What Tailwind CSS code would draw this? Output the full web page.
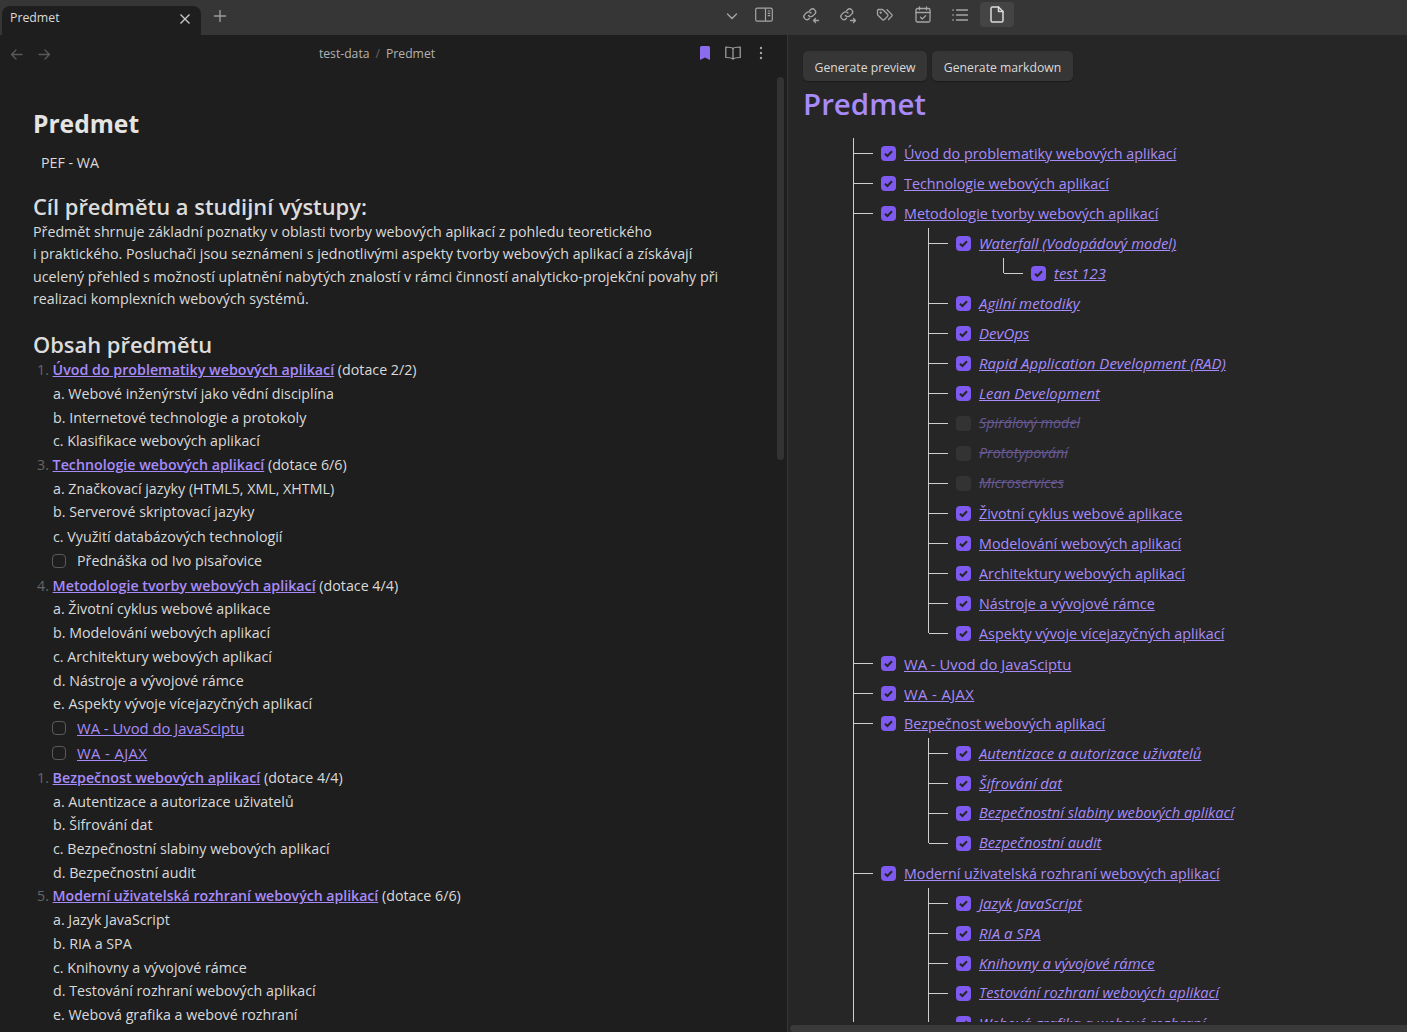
<!DOCTYPE html>
<html><head><meta charset="utf-8"><script src="https://cdn.jsdelivr.net/npm/@tailwindcss/browser@4"></script></head>
<body class="bg-[#1e1e1e] overflow-hidden">
<div class="w-[1407px] h-[1032px] flex flex-col overflow-hidden font-['Open_Sans','Noto_Sans',sans-serif] text-[14.25px] text-[#dadada]">
<!-- top bar -->
<header class="h-[35px] shrink-0 bg-[#363636] flex">
  <div class="w-[787px] flex items-end relative pl-[2px]">
    <div class="w-[199px] h-[29px] bg-[#1e1e1e] rounded-t-lg flex items-center justify-between pl-2 pr-[10px] text-[12.3px] text-[#dadada] pb-[4px]">
      <span>Predmet</span>
      <svg class="w-[12px] h-[12px]" viewBox="0 0 12 12" fill="none" stroke="#c8c8c8" stroke-width="1.4"><path d="M1.5 1.5l9 9M10.5 1.5l-9 9"/></svg>
    </div>
    <svg class="ml-[13px] mb-[13px] w-[12px] h-[12px]" viewBox="0 0 12 12" fill="none" stroke="#999" stroke-width="1.4"><path d="M6 0v12M0 6h12"/></svg>
    <svg class="absolute left-[726px] top-[10px] w-[12px] h-[12px]" viewBox="0 0 12 12" fill="none" stroke="#a5a5a5" stroke-width="1.4" stroke-linecap="round"><path d="M1.5 4l4.5 4.5L10.5 4"/></svg>
    <svg class="absolute left-[755px] top-[7px] w-[18px] h-[16px]" viewBox="0 0 18 16" fill="none" stroke="#a5a5a5" stroke-width="1.2"><rect x=".7" y="1.2" width="16.6" height="13" rx="1.5"/><path d="M10.5 1.2v13M12.7 4h2.6M12.7 6.3h2.6M12.7 8.6h2.6"/></svg>
  </div>
  <div class="flex-1 flex items-start pl-[7px] pt-[2px] gap-[3px]">
    <div class="w-[34px] h-[25px] flex items-center justify-center">
      <svg class="w-[18px] h-[18px]" viewBox="0 0 18 18" fill="none" stroke="#a5a5a5" stroke-width="1.3" stroke-linecap="round" stroke-linejoin="round"><path d="M6.500 9.500a3 3 0 0 0 4.500.3l1.700-1.700a3 3 0 0 0-4.200-4.300l-1 1"/><path d="M9 7a3 3 0 0 0-4.500-.3L2.800 8.400a3 3 0 0 0 4.200 4.300l.5-.5"/><path d="M16.500 14.500h-5M13.500 12.500l-2 2 2 2"/></svg>
    </div>
    <div class="w-[34px] h-[25px] flex items-center justify-center">
      <svg class="w-[18px] h-[18px]" viewBox="0 0 18 18" fill="none" stroke="#a5a5a5" stroke-width="1.3" stroke-linecap="round" stroke-linejoin="round"><path d="M6.500 9.500a3 3 0 0 0 4.500.3l1.700-1.700a3 3 0 0 0-4.200-4.300l-1 1"/><path d="M9 7a3 3 0 0 0-4.500-.3L2.800 8.400a3 3 0 0 0 4.200 4.300l.5-.5"/><path d="M11.500 14.500h5M14.500 12.500l2 2-2 2"/></svg>
    </div>
    <div class="w-[34px] h-[25px] flex items-center justify-center">
      <svg class="w-[18px] h-[18px]" viewBox="0 0 18 18" fill="none" stroke="#a5a5a5" stroke-width="1.3" stroke-linecap="round" stroke-linejoin="round"><path d="M1.500 4.500v3.700c0 .4.200.8.500 1l4.300 4.300a1.500 1.500 0 0 0 2.100 0l3.100-3.100a1.500 1.500 0 0 0 0-2.100L7.200 4a1.500 1.500 0 0 0-1-.5H2.500a1 1 0 0 0-1 1z"/><path d="M11 3.800l4.800 4.800a1 1 0 0 1 0 1.500L12.500 13.500"/><circle cx="4.700" cy="6.700" r=".5"/></svg>
    </div>
    <div class="w-[34px] h-[25px] flex items-center justify-center ml-[1px]">
      <svg class="w-[16px] h-[17px]" viewBox="0 0 16 17" fill="none" stroke="#a5a5a5" stroke-width="1.3" stroke-linecap="round" stroke-linejoin="round"><rect x="1" y="2.500" width="14" height="13.500" rx="1.500"/><path d="M1 6.500h14M4.500 .8v3M11.500 .8v3M5.500 11.200l1.800 1.800 3.400-3.400"/></svg>
    </div>
    <div class="w-[34px] h-[25px] flex items-center justify-center">
      <svg class="w-[16px] h-[14px]" viewBox="0 0 16 14" fill="none" stroke="#a5a5a5" stroke-width="1.300" stroke-linecap="round"><path d="M4.500 2h11M4.500 7h11M4.500 12h11M.8 2h.5M.8 7h.5M.8 12h.5"/></svg>
    </div>
    <div class="w-[34px] h-[25px] flex items-center justify-center bg-[#444444] rounded-[4px]">
      <svg class="w-[14px] h-[17px]" viewBox="0 0 14 17" fill="none" stroke="#dadada" stroke-width="1.500" stroke-linecap="round" stroke-linejoin="round"><path d="M8.500 1H2.500A1.500 1.500 0 0 0 1 2.500v12A1.500 1.500 0 0 0 2.500 16h9a1.500 1.500 0 0 0 1.500-1.500V5.500z"/><path d="M8.500 1v4.500H13"/></svg>
    </div>
  </div>
</header>
<div class="flex-1 flex min-h-0">
<!-- left pane -->
<main class="w-[787px] shrink-0 relative flex flex-col">
  <div class="h-[37px] shrink-0 relative flex items-center justify-center text-[12.2px] text-[#b3b3b3] pt-[2px]">
    <svg class="absolute left-[10px] top-[13px] w-[13px] h-[13px]" viewBox="0 0 13 13" fill="none" stroke="#5a5a5a" stroke-width="1.300" stroke-linecap="round" stroke-linejoin="round"><path d="M12 6.500H1.500M6 2L1.500 6.500 6 11"/></svg>
    <svg class="absolute left-[38px] top-[13px] w-[13px] h-[13px]" viewBox="0 0 13 13" fill="none" stroke="#5a5a5a" stroke-width="1.300" stroke-linecap="round" stroke-linejoin="round"><path d="M1 6.500h10.500M7 2l4.500 4.500L7 11"/></svg>
    <span class="-ml-[33px]">test-data<span class="text-[#666] mx-[6px]">/</span>Predmet</span>
    <svg class="absolute left-[699px] top-[11px] w-[12px] h-[15px]" viewBox="0 0 12 15" fill="#8b6cef"><path d="M1 1.500A1.500 1.500 0 0 1 2.500 0h7A1.500 1.500 0 0 1 11 1.500V14L6 11.500 1 14z"/></svg>
    <svg class="absolute left-[725px] top-[11px] w-[16px] h-[14px]" viewBox="0 0 16 14" fill="none" stroke="#a5a5a5" stroke-width="1.200" stroke-linejoin="round"><path d="M8 2.500C6.500 1 4 1 .8 1v10.500c3 0 5.500 0 7.200 1.500 1.700-1.500 4.200-1.500 7.200-1.500V1C12 1 9.500 1 8 2.500zM8 2.500V13"/></svg>
    <svg class="absolute left-[759px] top-[11px] w-[4px] h-[14px]" viewBox="0 0 4 14" fill="#a5a5a5"><circle cx="2" cy="2" r="1.200"/><circle cx="2" cy="7" r="1.200"/><circle cx="2" cy="12" r="1.200"/></svg>
  </div>
  <div class="absolute left-[777px] top-[42px] w-[7px] h-[383px] bg-[#333333] rounded-full"></div>
  <article class="flex-1 overflow-hidden pl-[33px] pr-[60px] pt-[33px]">
    <h1 class="text-[24.600px] leading-[36px] font-bold text-[#e4e4e4] pt-px">Predmet</h1>
    <p class="pl-[8px] leading-[24px] mt-[9px]">PEF - WA</p>
    <h2 class="text-[21.900px] leading-[32px] font-semibold text-[#dcdcdc] mt-[16px] w-max">Cíl předmětu a studijní výstupy:</h2>
    <p class="leading-[22.400px] mt-[-2px] w-[700px]">Předmět shrnuje základní poznatky v oblasti tvorby webových aplikací z pohledu teoretického<br>i praktického. Posluchači jsou seznámeni s jednotlivými aspekty tvorby webových aplikací a získávají<br>ucelený přehled s možností uplatnění nabytých znalostí v rámci činností analyticko-projekční povahy při<br>realizaci komplexních webových systémů.</p>
    <h2 class="text-[21.900px] leading-[32px] font-semibold text-[#dcdcdc] mt-[18px]">Obsah předmětu</h2>
    <ol class="-ml-[33px] mt-[-2.5px] leading-[23.700px]">
      <li class="pl-[37px]"><span class="text-[#666]">1.</span> <a class="font-semibold text-[#a88bfa] underline">Úvod do problematiky webových aplikací</a> (dotace 2/2)</li>
      <li class="pl-[53px]">a. Webové inženýrství jako vědní disciplína</li>
      <li class="pl-[53px]">b. Internetové technologie a protokoly</li>
      <li class="pl-[53px]">c. Klasifikace webových aplikací</li>
      <li class="pl-[37px]"><span class="text-[#666]">3.</span> <a class="font-semibold text-[#a88bfa] underline">Technologie webových aplikací</a> (dotace 6/6)</li>
      <li class="pl-[53px]">a. Značkovací jazyky (HTML5, XML, XHTML)</li>
      <li class="pl-[53px]">b. Serverové skriptovací jazyky</li>
      <li class="pl-[53px] mt-px">c. Využití databázových technologií</li>
      <li class="pl-[52px] flex items-center gap-[11px] h-[25px]"><span class="w-[14px] h-[14px] rounded-[4px] border border-[#5a5a5a]"></span>Přednáška od Ivo pisařovice</li>
      <li class="pl-[37px]"><span class="text-[#666]">4.</span> <a class="font-semibold text-[#a88bfa] underline">Metodologie tvorby webových aplikací</a> (dotace 4/4)</li>
      <li class="pl-[53px]">a. Životní cyklus webové aplikace</li>
      <li class="pl-[53px]">b. Modelování webových aplikací</li>
      <li class="pl-[53px]">c. Architektury webových aplikací</li>
      <li class="pl-[53px]">d. Nástroje a vývojové rámce</li>
      <li class="pl-[53px]">e. Aspekty vývoje vícejazyčných aplikací</li>
      <li class="pl-[52px] flex items-center gap-[11px] h-[25px]"><span class="w-[14px] h-[14px] rounded-[4px] border border-[#5a5a5a]"></span><a class="text-[#a88bfa] underline text-[14.800px]">WA - Uvod do JavaSciptu</a></li>
      <li class="pl-[52px] flex items-center gap-[11px] h-[25px]"><span class="w-[14px] h-[14px] rounded-[4px] border border-[#5a5a5a]"></span><a class="text-[#a88bfa] underline text-[14.800px] tracking-[0.4px]">WA - AJAX</a></li>
      <li class="pl-[37px]"><span class="text-[#666]">1.</span> <a class="font-semibold text-[#a88bfa] underline">Bezpečnost webových aplikací</a> (dotace 4/4)</li>
      <li class="pl-[53px]">a. Autentizace a autorizace uživatelů</li>
      <li class="pl-[53px]">b. Šifrování dat</li>
      <li class="pl-[53px]">c. Bezpečnostní slabiny webových aplikací</li>
      <li class="pl-[53px]">d. Bezpečnostní audit</li>
      <li class="pl-[37px]"><span class="text-[#666]">5.</span> <a class="font-semibold text-[14.100px] text-[#a88bfa] underline">Moderní uživatelská rozhraní webových aplikací</a> (dotace 6/6)</li>
      <li class="pl-[53px]">a. Jazyk JavaScript</li>
      <li class="pl-[53px]">b. RIA a SPA</li>
      <li class="pl-[53px]">c. Knihovny a vývojové rámce</li>
      <li class="pl-[53px]">d. Testování rozhraní webových aplikací</li>
      <li class="pl-[53px]">e. Webová grafika a webové rozhraní</li>
    </ol>
  </article>
</main>
<!-- right pane -->
<aside class="flex-1 min-w-0 bg-[#262626] border-l border-[#363636] relative flex flex-col">
  <div class="h-[987px] overflow-hidden pl-[15px] pt-[16px]">
    <div class="flex gap-[5px]">
      <button class="h-[30px] w-[124px] pt-[4px] rounded-[5px] bg-[#363636] text-[12.200px] text-[#dadada] shadow-[0_1px_1px_rgba(0,0,0,0.3)]">Generate preview</button>
      <button class="h-[30px] w-[141px] pt-[4px] rounded-[5px] bg-[#363636] text-[12.200px] text-[#dadada] shadow-[0_1px_1px_rgba(0,0,0,0.3)]">Generate markdown</button>
    </div>
    <h1 class="text-[29.500px] leading-[46px] font-semibold text-[#a88bfa]">Predmet</h1>
    <ul class="ml-[50px] mt-[11px] text-[14.350px] [&_li]:relative [&_li]:border-l [&_li]:border-[#cfcfcf] [&_li:last-child]:border-l-transparent [&_ul]:ml-[74px] [&_a]:text-[#a88bfa] [&_a]:underline [&_a]:pt-[2px] [&_a.italic]:pt-0 [&_.r]:flex [&_.r]:items-center [&_.r]:h-[30px] [&_.c]:w-[19px] [&_.c]:h-px [&_.c]:bg-[#cfcfcf] [&_.c]:mr-[8px] [&_svg]:w-[15px] [&_svg]:h-[15px] [&_svg]:mr-[8px] [&_svg]:shrink-0">
      <li><div class="r"><i class="c"></i><svg viewBox="0 0 15 15"><rect width="15" height="15" rx="4" fill="#7f5af0"/><path d="M4 7.800l2.400 2.200L11 5.200" fill="none" stroke="#262626" stroke-width="2"/></svg><a>Úvod do problematiky webových aplikací</a></div></li>
      <li><div class="r"><i class="c"></i><svg viewBox="0 0 15 15"><rect width="15" height="15" rx="4" fill="#7f5af0"/><path d="M4 7.800l2.400 2.200L11 5.200" fill="none" stroke="#262626" stroke-width="2"/></svg><a>Technologie webových aplikací</a></div></li>
      <li><div class="r"><i class="c"></i><svg viewBox="0 0 15 15"><rect width="15" height="15" rx="4" fill="#7f5af0"/><path d="M4 7.800l2.400 2.200L11 5.200" fill="none" stroke="#262626" stroke-width="2"/></svg><a>Metodologie tvorby webových aplikací</a></div>
        <ul>
          <li><div class="r"><i class="c"></i><svg viewBox="0 0 15 15"><rect width="15" height="15" rx="4" fill="#7f5af0"/><path d="M4 7.800l2.400 2.200L11 5.200" fill="none" stroke="#262626" stroke-width="2"/></svg><a class="italic text-[14.800px]">Waterfall (Vodopádový model)</a></div>
            <ul>
              <li><b class="absolute -left-px top-0 w-px h-[15px] bg-[#cfcfcf]"></b><div class="r"><i class="c"></i><svg viewBox="0 0 15 15"><rect width="15" height="15" rx="4" fill="#7f5af0"/><path d="M4 7.800l2.400 2.200L11 5.200" fill="none" stroke="#262626" stroke-width="2"/></svg><a class="italic text-[14.800px]">test 123</a></div></li>
            </ul>
          </li>
          <li><div class="r"><i class="c"></i><svg viewBox="0 0 15 15"><rect width="15" height="15" rx="4" fill="#7f5af0"/><path d="M4 7.800l2.400 2.200L11 5.200" fill="none" stroke="#262626" stroke-width="2"/></svg><a class="italic text-[15px]">Agilní metodiky</a></div></li>
          <li><div class="r"><i class="c"></i><svg viewBox="0 0 15 15"><rect width="15" height="15" rx="4" fill="#7f5af0"/><path d="M4 7.800l2.400 2.200L11 5.200" fill="none" stroke="#262626" stroke-width="2"/></svg><a class="italic text-[15px]">DevOps</a></div></li>
          <li><div class="r"><i class="c"></i><svg viewBox="0 0 15 15"><rect width="15" height="15" rx="4" fill="#7f5af0"/><path d="M4 7.800l2.400 2.200L11 5.200" fill="none" stroke="#262626" stroke-width="2"/></svg><a class="italic text-[15px]">Rapid Application Development (RAD)</a></div></li>
          <li><div class="r"><i class="c"></i><svg viewBox="0 0 15 15"><rect width="15" height="15" rx="4" fill="#7f5af0"/><path d="M4 7.800l2.400 2.200L11 5.200" fill="none" stroke="#262626" stroke-width="2"/></svg><a class="italic text-[14.800px]">Lean Development</a></div></li>
          <li><div class="r"><i class="c"></i><svg viewBox="0 0 15 15"><rect width="15" height="15" rx="4" fill="#333333"/></svg><a class="italic !line-through opacity-50">Spirálový model</a></div></li>
          <li><div class="r"><i class="c"></i><svg viewBox="0 0 15 15"><rect width="15" height="15" rx="4" fill="#333333"/></svg><a class="italic !line-through opacity-50">Prototypování</a></div></li>
          <li><div class="r"><i class="c"></i><svg viewBox="0 0 15 15"><rect width="15" height="15" rx="4" fill="#333333"/></svg><a class="italic !line-through opacity-50">Microservices</a></div></li>
          <li><div class="r"><i class="c"></i><svg viewBox="0 0 15 15"><rect width="15" height="15" rx="4" fill="#7f5af0"/><path d="M4 7.800l2.400 2.200L11 5.200" fill="none" stroke="#262626" stroke-width="2"/></svg><a>Životní cyklus webové aplikace</a></div></li>
          <li><div class="r"><i class="c"></i><svg viewBox="0 0 15 15"><rect width="15" height="15" rx="4" fill="#7f5af0"/><path d="M4 7.800l2.400 2.200L11 5.200" fill="none" stroke="#262626" stroke-width="2"/></svg><a>Modelování webových aplikací</a></div></li>
          <li><div class="r"><i class="c"></i><svg viewBox="0 0 15 15"><rect width="15" height="15" rx="4" fill="#7f5af0"/><path d="M4 7.800l2.400 2.200L11 5.200" fill="none" stroke="#262626" stroke-width="2"/></svg><a>Architektury webových aplikací</a></div></li>
          <li><div class="r"><i class="c"></i><svg viewBox="0 0 15 15"><rect width="15" height="15" rx="4" fill="#7f5af0"/><path d="M4 7.800l2.400 2.200L11 5.200" fill="none" stroke="#262626" stroke-width="2"/></svg><a>Nástroje a vývojové rámce</a></div></li>
          <li><b class="absolute -left-px top-0 w-px h-[15px] bg-[#cfcfcf]"></b><div class="r"><i class="c"></i><svg viewBox="0 0 15 15"><rect width="15" height="15" rx="4" fill="#7f5af0"/><path d="M4 7.800l2.400 2.200L11 5.200" fill="none" stroke="#262626" stroke-width="2"/></svg><a>Aspekty vývoje vícejazyčných aplikací</a></div></li>
        </ul>
      </li>
      <li><div class="r"><i class="c"></i><svg viewBox="0 0 15 15"><rect width="15" height="15" rx="4" fill="#7f5af0"/><path d="M4 7.800l2.400 2.200L11 5.200" fill="none" stroke="#262626" stroke-width="2"/></svg><a class="text-[14.800px]">WA - Uvod do JavaSciptu</a></div></li>
      <li><div class="r"><i class="c"></i><svg viewBox="0 0 15 15"><rect width="15" height="15" rx="4" fill="#7f5af0"/><path d="M4 7.800l2.400 2.200L11 5.200" fill="none" stroke="#262626" stroke-width="2"/></svg><a class="text-[14.800px] tracking-[0.4px]">WA - AJAX</a></div></li>
      <li><div class="r"><i class="c"></i><svg viewBox="0 0 15 15"><rect width="15" height="15" rx="4" fill="#7f5af0"/><path d="M4 7.800l2.400 2.200L11 5.200" fill="none" stroke="#262626" stroke-width="2"/></svg><a>Bezpečnost webových aplikací</a></div>
        <ul>
          <li><div class="r"><i class="c"></i><svg viewBox="0 0 15 15"><rect width="15" height="15" rx="4" fill="#7f5af0"/><path d="M4 7.800l2.400 2.200L11 5.200" fill="none" stroke="#262626" stroke-width="2"/></svg><a class="italic text-[14.800px]">Autentizace a autorizace uživatelů</a></div></li>
          <li><div class="r"><i class="c"></i><svg viewBox="0 0 15 15"><rect width="15" height="15" rx="4" fill="#7f5af0"/><path d="M4 7.800l2.400 2.200L11 5.200" fill="none" stroke="#262626" stroke-width="2"/></svg><a class="italic text-[14.800px]">Šifrování dat</a></div></li>
          <li><div class="r"><i class="c"></i><svg viewBox="0 0 15 15"><rect width="15" height="15" rx="4" fill="#7f5af0"/><path d="M4 7.800l2.400 2.200L11 5.200" fill="none" stroke="#262626" stroke-width="2"/></svg><a class="italic text-[14.650px]">Bezpečnostní slabiny webových aplikací</a></div></li>
          <li><b class="absolute -left-px top-0 w-px h-[15px] bg-[#cfcfcf]"></b><div class="r"><i class="c"></i><svg viewBox="0 0 15 15"><rect width="15" height="15" rx="4" fill="#7f5af0"/><path d="M4 7.800l2.400 2.200L11 5.200" fill="none" stroke="#262626" stroke-width="2"/></svg><a class="italic text-[14.650px]">Bezpečnostní audit</a></div></li>
        </ul>
      </li>
      <li class="!border-l-[#cfcfcf]"><div class="r"><i class="c"></i><svg viewBox="0 0 15 15"><rect width="15" height="15" rx="4" fill="#7f5af0"/><path d="M4 7.800l2.400 2.200L11 5.200" fill="none" stroke="#262626" stroke-width="2"/></svg><a class="text-[14.250px]">Moderní uživatelská rozhraní webových aplikací</a></div>
        <ul>
          <li><div class="r"><i class="c"></i><svg viewBox="0 0 15 15"><rect width="15" height="15" rx="4" fill="#7f5af0"/><path d="M4 7.800l2.400 2.200L11 5.200" fill="none" stroke="#262626" stroke-width="2"/></svg><a class="italic text-[15px]">Jazyk JavaScript</a></div></li>
          <li><div class="r"><i class="c"></i><svg viewBox="0 0 15 15"><rect width="15" height="15" rx="4" fill="#7f5af0"/><path d="M4 7.800l2.400 2.200L11 5.200" fill="none" stroke="#262626" stroke-width="2"/></svg><a class="italic text-[15px]">RIA a SPA</a></div></li>
          <li><div class="r"><i class="c"></i><svg viewBox="0 0 15 15"><rect width="15" height="15" rx="4" fill="#7f5af0"/><path d="M4 7.800l2.400 2.200L11 5.200" fill="none" stroke="#262626" stroke-width="2"/></svg><a class="italic text-[14.800px]">Knihovny a vývojové rámce</a></div></li>
          <li><div class="r"><i class="c"></i><svg viewBox="0 0 15 15"><rect width="15" height="15" rx="4" fill="#7f5af0"/><path d="M4 7.800l2.400 2.200L11 5.200" fill="none" stroke="#262626" stroke-width="2"/></svg><a class="italic text-[14.600px]">Testování rozhraní webových aplikací</a></div></li>
          <li class="!border-l-[#cfcfcf]"><div class="r"><i class="c"></i><svg viewBox="0 0 15 15"><rect width="15" height="15" rx="4" fill="#7f5af0"/><path d="M4 7.800l2.400 2.200L11 5.200" fill="none" stroke="#262626" stroke-width="2"/></svg><a class="italic text-[14.800px]">Webová grafika a webové rozhraní</a></div></li>
        </ul>
      </li>
    </ul>
  </div>
  <div class="absolute left-[2px] right-0 bottom-0 h-[7px] bg-[#3a3a3a] rounded-l-full"></div>
</aside>
</div>
</div>
</body></html>
